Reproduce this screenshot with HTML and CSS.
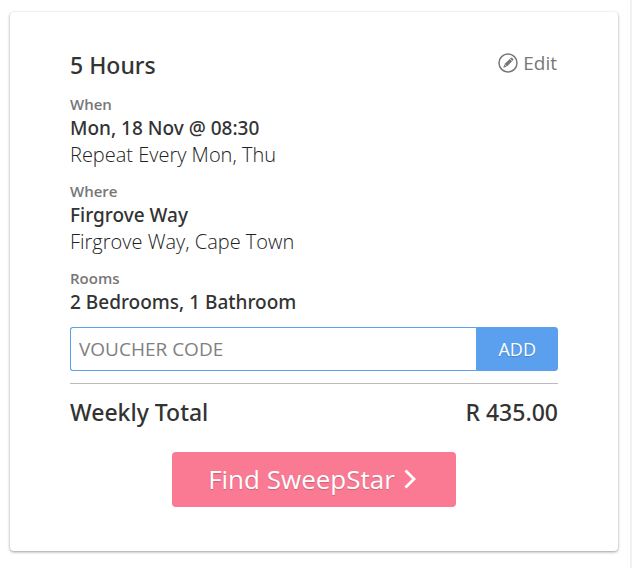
FILE: index.html
```html
<!DOCTYPE html>
<html lang="en">
<head>
<meta charset="utf-8">
<meta name="viewport" content="width=device-width, initial-scale=1">
<title>Booking summary</title>
<link rel="stylesheet" href="styles.css">
</head>
<body>
<main class="card">
  <header class="row head">
    <h1 class="title">5 Hours</h1>
    <a class="edit" href="#">
      <svg class="edit-icon" viewBox="0 0 20 20" aria-hidden="true">
        <circle cx="10" cy="10" r="9" fill="none" stroke="currentColor" stroke-width="1.5"/>
        <path d="M5.3 14.7 6.2 11.5 8.5 13.8ZM6.5 11.1 11.7 5.9 14.1 8.3 8.9 13.5ZM12.1 5.5 13 4.7Q13.5 4.3 14 4.8L15.2 6Q15.7 6.5 15.3 7L14.5 7.9Z" fill="currentColor"/>
      </svg>
      <span>Edit</span>
    </a>
  </header>
  <section class="group">
    <h2 class="label">When</h2>
    <p class="value">Mon, 18 Nov @ 08:30</p>
    <p class="detail">Repeat Every Mon, Thu</p>
  </section>
  <section class="group">
    <h2 class="label">Where</h2>
    <p class="value">Firgrove Way</p>
    <p class="detail">Firgrove Way, Cape Town</p>
  </section>
  <section class="group">
    <h2 class="label">Rooms</h2>
    <p class="value">2 Bedrooms, 1 Bathroom</p>
  </section>
  <form class="voucher">
    <input class="code" type="text" placeholder="VOUCHER CODE" aria-label="Voucher code">
    <button class="add" type="button">ADD</button>
  </form>
  <div class="row total">
    <span>Weekly Total</span>
    <span>R 435.00</span>
  </div>
  <button class="find" type="button">
    <span>Find SweepStar</span>
    <svg class="chevron" viewBox="0 0 12 20" aria-hidden="true"><path d="M1.5 1.5 10 10 1.5 18.5" fill="none" stroke="currentColor" stroke-width="2.8"/></svg>
  </button>
</main>
</body>
</html>
```
FILE: styles.css
```css
* { box-sizing: border-box; }

body {
  margin: 0;
  min-height: 100vh;
  padding: 12px 12px 16px 10px;
  border-right: 2px solid #f1f1f1;
  background: #fff;
  color: #333;
  font-family: "Open Sans", "Noto Sans", sans-serif;
}

h1, h2, p { margin: 0; }

.card {
  padding: 40px 60px 44px;
  border-radius: 4px;
  background: #fff;
  box-shadow: 0 1px 3px rgba(0, 0, 0, 0.4);
}

.row {
  display: flex;
  justify-content: space-between;
}

.head { padding-bottom: 3px; }

.title {
  font-family: "Noto Sans", sans-serif;
  font-size: 23px;
  font-weight: 500;
  line-height: 26px;
}

.edit {
  display: flex;
  align-items: center;
  gap: 5px;
  height: 22px;
  padding-right: 1px;
  color: #777;
  font-size: 19px;
  text-decoration: none;
}

.edit-icon { width: 20px; height: 20px; }

.group { margin-top: 12px; }

.label {
  color: #777;
  font-size: 15px;
  font-weight: 600;
  line-height: 22px;
}

.value {
  font-family: "Noto Sans", sans-serif;
  font-size: 19px;
  font-weight: 500;
  line-height: 26px;
}

.detail {
  color: #222;
  font-size: 20px;
  font-weight: 300;
  line-height: 27px;
}

.voucher {
  display: flex;
  height: 44px;
  margin-top: 12px;
}

.code, .add {
  border: 1px solid #5aa0ee;
  font-family: inherit;
}

.code {
  flex: 1;
  min-width: 0;
  padding: 0 8px;
  border-right: 0;
  border-radius: 3px 0 0 3px;
  background: #fff;
  color: #333;
  font-size: 19px;
}

.code::placeholder { color: #808080; opacity: 1; }

.add {
  padding: 0 21px;
  border-radius: 0 3px 3px 0;
  background: #5aa0ee;
  color: #fff;
  font-size: 18px;
  text-shadow: 0 1px 1px rgba(0, 0, 0, 0.2);
}

.total {
  margin-top: 12px;
  padding-top: 14px;
  border-top: 1px solid #bbb;
  font-family: "Noto Sans", sans-serif;
  font-size: 23px;
  font-weight: 500;
  line-height: 28px;
}

.find {
  display: flex;
  align-items: center;
  gap: 9px;
  height: 55px;
  margin: 26px auto 0;
  padding: 0 40px 2px 36px;
  border: 0;
  border-radius: 4px;
  background: #fa7a94;
  color: #fff;
  font-family: inherit;
  font-size: 26px;
  text-shadow: 0 1px 1px rgba(0, 0, 0, 0.2);
}

.chevron {
  width: 12px;
  height: 20px;
}
```
